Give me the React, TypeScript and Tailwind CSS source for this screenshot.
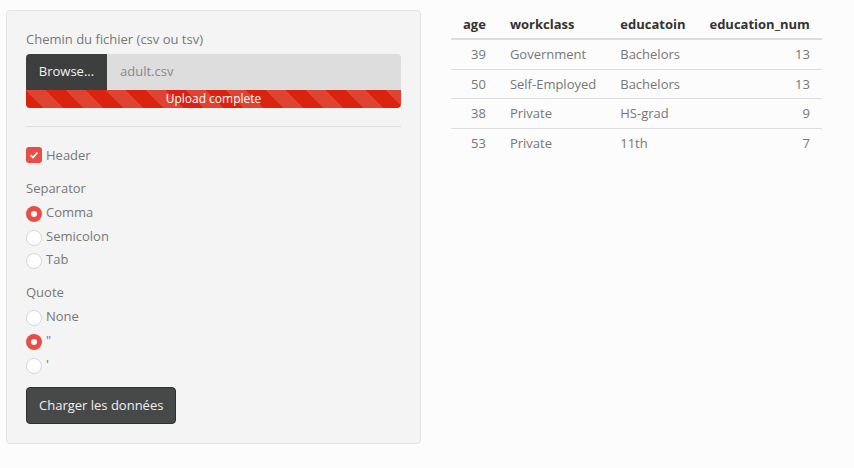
import React from "react";

const rows = [
  { age: 39, workclass: "Government", education: "Bachelors", num: 13 },
  { age: 50, workclass: "Self-Employed", education: "Bachelors", num: 13 },
  { age: 38, workclass: "Private", education: "HS-grad", num: 9 },
  { age: 53, workclass: "Private", education: "11th", num: 7 },
];

const Radio = ({ checked, label, mt }: { checked?: boolean; label: string; mt: string }) => (
  <div className={`flex items-start gap-1 h-[18px] ${mt}`}>
    {checked ? (
      <span className="mt-[3px] w-4 h-4 rounded-full bg-[#ea4d45] flex items-center justify-center">
        <span className="w-[6px] h-[6px] rounded-full bg-white" />
      </span>
    ) : (
      <span className="mt-[3px] w-4 h-4 rounded-full bg-white border border-[#d6d6d6]" />
    )}
    <span className="leading-[18px]">{label}</span>
  </div>
);

export default function App() {
  return (
    <div
      className="w-[854px] h-[468px] bg-[#fcfcfc] flex items-start text-[13px] text-[#777]"
      style={{ fontFamily: '"Open Sans", "Noto Sans", sans-serif' }}
    >
      <div className="ml-[6px] mt-[10px] w-[415px] h-[434px] bg-[#f4f4f4] border border-[#e3e3e3] rounded px-[19px] pt-[19px] flex flex-col">
        <div className="leading-[18px] h-[18px]">Chemin du fichier (csv ou tsv)</div>
        <div className="mt-[6px] h-[36px] flex">
          <div className="w-[81px] bg-[#3d3f3f] text-[#f2f2f2] rounded-tl flex items-center justify-center">
            Browse...
          </div>
          <div className="flex-1 bg-[#dddddd] rounded-tr flex items-center pl-[13px] text-[#888]">
            adult.csv
          </div>
        </div>
        <div
          className="h-[18px] bg-[#d9230f] rounded-b text-white text-[12px] leading-[18px] text-center"
          style={{
            backgroundImage:
              "linear-gradient(45deg, rgba(255,255,255,.15) 25%, transparent 25%, transparent 50%, rgba(255,255,255,.15) 50%, rgba(255,255,255,.15) 75%, transparent 75%, transparent)",
            backgroundSize: "40px 40px",
          }}
        >
          Upload complete
        </div>
        <div className="mt-[18px] h-px bg-[#dddddd]" />
        <div className="mt-[19px] h-[18px] flex items-start gap-1">
          <span className="mt-px w-4 h-4 rounded-[3px] bg-[#ea4d45] flex items-center justify-center">
            <svg width="10" height="10" viewBox="0 0 10 10">
              <path d="M1.5 5.2 L4 7.5 L8.5 2.5" stroke="white" strokeWidth="1.8" fill="none" />
            </svg>
          </span>
          <span className="leading-[18px]">Header</span>
        </div>
        <div className="mt-[15px] h-[18px] leading-[18px]">Separator</div>
        <Radio checked label="Comma" mt="mt-[6px]" />
        <Radio label="Semicolon" mt="mt-[6px]" />
        <Radio label="Tab" mt="mt-[5px]" />
        <div className="mt-[15px] h-[18px] leading-[18px]">Quote</div>
        <Radio label="None" mt="mt-[6px]" />
        <Radio checked label={'"'} mt="mt-[6px]" />
        <Radio label="'" mt="mt-[6px]" />
        <div className="mt-[14px]">
          <button className="h-[37px] px-3 bg-[#474949] border border-[#2f3030] rounded text-[#f0f0f0]">
            Charger les données
          </button>
        </div>
      </div>
      <div className="ml-[30px] mt-[10px]">
        <table className="border-collapse">
          <thead>
            <tr className="border-b-2 border-[#dddddd] text-[#333]">
              <th className="px-3 py-[5px] leading-[18px] font-bold text-right">age</th>
              <th className="px-3 py-[5px] leading-[18px] font-bold text-left">workclass</th>
              <th className="px-3 py-[5px] leading-[18px] font-bold text-left">educatoin</th>
              <th className="px-3 py-[5px] leading-[18px] font-bold text-right">education_num</th>
            </tr>
          </thead>
          <tbody>
            {rows.map((r, i) => (
              <tr key={i} className={i < rows.length - 1 ? "border-b border-[#dddddd]" : ""}>
                <td className="px-3 py-[5px] leading-[18.5px] text-right">{r.age}</td>
                <td className="px-3 py-[5px] leading-[18.5px]">{r.workclass}</td>
                <td className="px-3 py-[5px] leading-[18.5px]">{r.education}</td>
                <td className="px-3 py-[5px] leading-[18.5px] text-right">{r.num}</td>
              </tr>
            ))}
          </tbody>
        </table>
      </div>
    </div>
  );
}
